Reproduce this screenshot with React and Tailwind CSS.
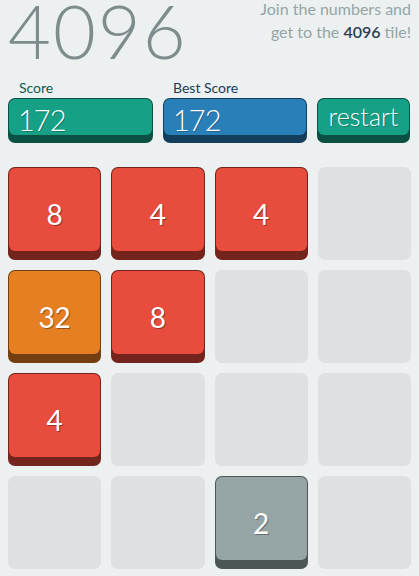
import React from "react";

const TILE_STYLES = {
  2: { face: "bg-[#95a5a6]", lip: "bg-[#4d5657]" },
  4: { face: "bg-[#e74c3c]", lip: "bg-[#72241d]" },
  8: { face: "bg-[#e74c3c]", lip: "bg-[#72241d]" },
  32: { face: "bg-[#e67e22]", lip: "bg-[#733f10]" },
};

// board, row by row (0 = empty cell)
const board = [
  [8, 4, 4, 0],
  [32, 8, 0, 0],
  [4, 0, 0, 0],
  [0, 0, 2, 0],
];

const Tile = ({ value }) => {
  if (!value) {
    return <div className="h-[93px] rounded-[7px] bg-[#dde1e4]" />;
  }
  const s = TILE_STYLES[value];
  return (
    <div className={`h-[93px] rounded-[7px] ${s.lip} flex flex-col p-px pb-[9px]`}>
      <div
        className={`flex-1 rounded-[6px] ${s.face} flex items-center justify-center pt-[8px] leading-none text-white text-[28px] [text-shadow:1px_1px_0_rgba(0,0,0,0.35)]`}
      >
        {value}
      </div>
    </div>
  );
};

const ScoreBox = ({ value, face, lip, width }) => (
  <div className={`${width} h-[45px] rounded-[7px] ${lip} flex flex-col p-px pb-[8px]`}>
    <div
      className={`flex-1 min-h-0 rounded-[6px] ${face} flex items-center pl-[9px] pt-[5px] leading-none text-white text-[29px] tracking-[-1px] font-light [text-shadow:1px_1px_0_rgba(0,0,0,0.25)]`}
    >
      {value}
    </div>
  </div>
);

export default function App() {
  return (
    <div
      className="min-h-screen h-[576px] overflow-hidden bg-[#ecf0f1] px-2"
      style={{ fontFamily: "Lato, 'Open Sans', sans-serif" }}
    >
      {/* HEADER */}
      <div className="flex justify-between h-[78px]">
        <h1 className="pt-[1px] text-[74px] leading-[60px] font-light text-[#7f8c8d] tracking-[2px]">
          4096
        </h1>
        <p className="mt-[-3px] text-right text-[16px] leading-[23px] text-[#95a5a6]">
          Join the numbers and
          <br />
          get to the <span className="font-semibold text-[#2c3e50]">4096</span> tile!
        </p>
      </div>

      {/* LABELS */}
      <div className="flex h-[20px] text-[14px] leading-[20px]">
        <span className="w-[155px] pl-[11px] text-[#0f5c4b]">Score</span>
        <span className="pl-[10px] text-[#1b3b57]">Best Score</span>
      </div>

      {/* SCORES + RESTART */}
      <div className="flex gap-[10px]">
        <ScoreBox value={172} face="bg-[#16a085]" lip="bg-[#0b5143]" width="w-[145px]" />
        <ScoreBox value={172} face="bg-[#2980b9]" lip="bg-[#153e5c]" width="w-[144px]" />
        <button className="w-[93px] h-[45px] rounded-[7px] bg-[#0b5143] flex flex-col p-px pb-[8px]">
          <span className="flex-1 min-h-0 w-full rounded-[6px] bg-[#16a085] flex items-center justify-center pb-[2px] leading-none text-white text-[25px] font-light [text-shadow:1px_1px_0_rgba(0,0,0,0.25)]">
            restart
          </span>
        </button>
      </div>

      {/* BOARD */}
      <div className="mt-[24px] grid grid-cols-4 gap-[10px]">
        {board.flat().map((v, i) => (
          <Tile key={i} value={v} />
        ))}
      </div>
    </div>
  );
}
